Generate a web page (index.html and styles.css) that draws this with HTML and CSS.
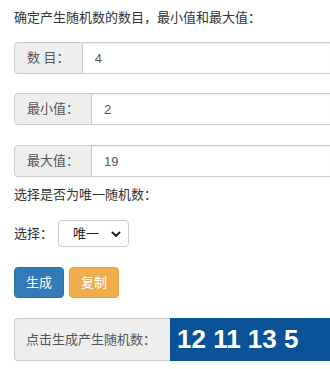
FILE: index.html
```html
<!DOCTYPE html>
<html lang="zh-CN">
<head>
<meta charset="utf-8">
<title>随机数生成</title>
<link rel="stylesheet" href="styles.css">
</head>
<body>
<div class="page">
  <p class="lead-text">确定产生随机数的数目，最小值和最大值：</p>
  <div class="input-group g1">
    <span class="addon">数 目：</span>
    <input class="field" type="text" value="4">
  </div>
  <div class="input-group g2">
    <span class="addon">最小值：</span>
    <input class="field" type="text" value="2">
  </div>
  <div class="input-group g3">
    <span class="addon">最大值：</span>
    <input class="field" type="text" value="19">
  </div>
  <p class="hint">选择是否为唯一随机数：</p>
  <div class="choose">
    <label class="choose-label">选择：</label>
    <div class="select-wrap">
      <select class="select"><option>唯一</option><option>不唯一</option></select>
      <svg class="chevron" width="10" height="7" viewBox="0 0 10 7"><path d="M1.5 1.5 L5 5 L8.5 1.5" fill="none" stroke="#222" stroke-width="2" stroke-linecap="round" stroke-linejoin="round"/></svg>
    </div>
  </div>
  <div class="btns">
    <button class="btn btn-primary">生成</button>
    <button class="btn btn-warning">复制</button>
  </div>
  <div class="result">
    <span class="addon result-addon">点击生成产生随机数：</span>
    <div class="output">12 11 13 5</div>
  </div>
</div>
</body>
</html>
```
FILE: styles.css
```css
html {
  overflow: hidden;
}
body {
  margin: 0;
  background: #fff;
  font-family: "Liberation Sans", "Noto Sans CJK SC", sans-serif;
  font-size: 13px;
  color: #333;
}
.page {
  display: flex;
  flex-direction: column;
  align-items: stretch;
  padding: 8px 0 0 14px;
}
.lead-text, .hint {
  margin: 0;
  line-height: 20px;
  height: 20px;
}
.input-group {
  display: flex;
  height: 32px;
  box-sizing: border-box;
}
.g1 { margin-top: 14px; }
.g2 { margin-top: 19px; }
.g3 { margin-top: 20px; }
.addon {
  display: flex;
  align-items: center;
  padding: 0 12px;
  background: #eee;
  border: 1px solid #ccc;
  border-radius: 4px 0 0 4px;
  color: #555;
  white-space: nowrap;
  line-height: 20px;
}
.field {
  flex: 1;
  min-width: 0;
  margin: 0;
  border: 1px solid #ccc;
  border-left: none;
  border-right: none;
  padding: 0 12px;
  font: inherit;
  font-size: 13px;
  color: #555;
  background: #fff;
  outline: none;
  box-shadow: inset 0 1px 1px rgba(0,0,0,.075);
}
.hint {
  margin-top: 8px;
}
.choose {
  display: flex;
  align-items: center;
  gap: 5px;
  margin-top: 15px;
}
.choose-label {
  line-height: 20px;
}
.select-wrap {
  position: relative;
  width: 71px;
  height: 27px;
}
.select {
  appearance: none;
  -webkit-appearance: none;
  width: 100%;
  height: 100%;
  margin: 0;
  box-sizing: border-box;
  border: 1px solid #ccc;
  border-radius: 4px;
  background: #fff;
  padding: 0 0 0 14px;
  font: inherit;
  font-size: 13px;
  color: #222;
  outline: none;
}
.chevron {
  position: absolute;
  right: 8px;
  top: 11px;
  pointer-events: none;
}
.btns {
  display: flex;
  gap: 5px;
  margin-top: 20px;
}
.btn {
  width: 50px;
  height: 31px;
  margin: 0;
  padding: 0;
  border: 1px solid transparent;
  border-radius: 4px;
  color: #fff;
  font: inherit;
  font-size: 13px;
  line-height: 20px;
}
.btn-primary {
  background: #337ab7;
  border-color: #2e6da4;
}
.btn-warning {
  background: #f0ad4e;
  border-color: #eea236;
}
.result {
  display: flex;
  margin-top: 20px;
  height: 43px;
}
.result-addon {
  width: 156px;
  flex: none;
  box-sizing: border-box;
  padding: 0 0 0 11px;
  border-right: none;
}
.output {
  flex: 1;
  background: #0a5296;
  color: #fff;
  font-family: "Liberation Sans", Arial, sans-serif;
  font-weight: bold;
  font-size: 26px;
  line-height: 43px;
  padding-left: 7px;
}
```
